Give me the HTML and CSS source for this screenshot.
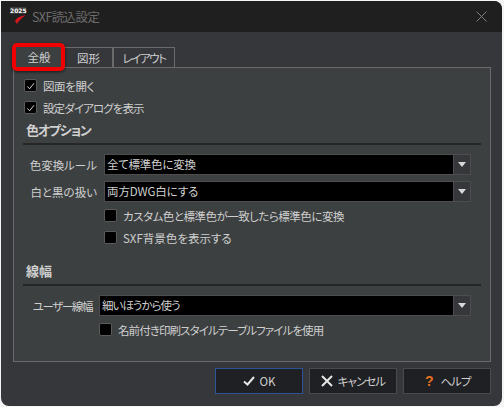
FILE: index.html
```html
<!DOCTYPE html>
<html lang="ja">
<head>
<meta charset="utf-8">
<title>SXF読込設定</title>
<link rel="stylesheet" href="styles.css">
</head>
<body>
<div class="window">
  <header class="titlebar">
    <div class="logo">
      <span class="logo-year">2025</span>
      <svg class="logo-mark" viewBox="0 0 12 9" width="12" height="9"><path d="M12 0 C7 1 2 3 1 6 L3 9 C5 5 8 3 12 0Z" fill="#d8141c"/></svg>
    </div>
    <span class="title">SXF読込設定</span>
    <svg class="close" viewBox="0 0 11 11" width="11" height="11"><path d="M.5.5l10 10M10.5.5l-10 10" stroke="#808080" stroke-width="1" fill="none"/></svg>
  </header>
  <main class="body">
    <nav class="tabs">
      <span class="tab tab-active">全般</span>
      <span class="tab tab-2">図形</span>
      <span class="tab tab-3"><span class="tight-14">レイアウト</span></span>
      <span class="highlight"></span>
    </nav>
    <section class="panel">
      <label class="check check-top">
        <span class="box"><svg viewBox="0 0 12 12" width="12" height="12"><path d="M2.5 6.5l2.5 2.5 4.8-6" stroke="#e8e8e8" stroke-width="1" fill="none"/></svg></span>
        <span class="tight-04">図面を開く</span>
      </label>
      <label class="check check-second">
        <span class="box"><svg viewBox="0 0 12 12" width="12" height="12"><path d="M2.5 6.5l2.5 2.5 4.8-6" stroke="#e8e8e8" stroke-width="1" fill="none"/></svg></span>
        <span class="tight-09">設定ダイアログを表示</span>
      </label>
      <h2 class="heading heading-color"><span class="tight-12">色オプション</span></h2>
      <div class="row row-first">
        <span class="row-label">色変換ルール</span>
        <div class="select"><span class="value tight-02">全て標準色に変換</span><span class="arrow"></span></div>
      </div>
      <div class="row row-next">
        <span class="row-label">白と黒の扱い</span>
        <div class="select"><span class="value tight-01">両方DWG白にする</span><span class="arrow"></span></div>
      </div>
      <label class="check check-sub">
        <span class="box"></span>
        <span class="tight-05">カスタム色と標準色が一致したら標準色に変換</span>
      </label>
      <label class="check check-sub check-sub2">
        <span class="box"></span>
        <span>SXF背景色を表示する</span>
      </label>
      <h2 class="heading heading-line">線幅</h2>
      <div class="row row-width">
        <span class="row-label row-label-narrow"><span class="tight-14">ユーザー線幅</span></span>
        <div class="select"><span class="value tight-10">細いほうから使う</span><span class="arrow"></span></div>
      </div>
      <label class="check check-print">
        <span class="box"></span>
        <span class="tight-09">名前付き印刷スタイルテーブルファイルを使用</span>
      </label>
    </section>
    <footer class="buttons">
      <button class="btn btn-ok"><svg viewBox="0 0 12 10" width="12" height="10"><path d="M1 5.5l3.5 3L11 1" stroke="#e6e6e6" stroke-width="2" fill="none"/></svg>OK</button>
      <button class="btn"><svg viewBox="0 0 12 12" width="12" height="12"><path d="M1 1l10 10M11 1L1 11" stroke="#e6e6e6" stroke-width="2" fill="none"/></svg><span class="tight-09">キャンセル</span></button>
      <button class="btn"><span class="help">?</span><span class="tight-09">ヘルプ</span></button>
    </footer>
  </main>
</div>
</body>
</html>
```
FILE: styles.css
```css
* { box-sizing: border-box; }
html, body { margin: 0; padding: 0; width: 504px; height: 407px; background: #f4f4f4; overflow: hidden; }
body { padding: 1px 2px 1px 1px; font-family: "Noto Sans CJK JP", "Noto Sans", sans-serif; font-size: 11.5px; line-height: 14px; color: #cfcfcf; font-feature-settings: "palt"; }
.window { width: 501px; height: 405px; border-radius: 0 8px 8px 8px; overflow: hidden; background: #35373b; display: flex; flex-direction: column; }
.titlebar { height: 31px; flex: none; background: #1f1f1f; display: flex; align-items: center; padding: 0 15px 0 9px; }
.logo { width: 16px; height: 18px; margin-right: 6px; margin-top: -1px; display: flex; flex-direction: column; align-items: flex-end; }
.logo-year { font: bold 6px/7px "DejaVu Sans", sans-serif; color: #fff; background: #3a3a3a; width: 16px; text-align: center; }
.logo-mark { margin-top: 1px; }
.title { flex: 1; color: #6c6c6c; font-size: 12.5px; letter-spacing: -0.6px; }
.tight-01 { letter-spacing: -0.1px; }
.tight-02 { letter-spacing: -0.25px; }
.tight-04 { letter-spacing: -0.4px; }
.tight-05 { letter-spacing: -0.5px; }
.tight-09 { letter-spacing: -0.9px; }
.tight-10 { letter-spacing: -1px; }
.tight-12 { letter-spacing: -1.2px; }
.tight-14 { letter-spacing: -1.4px; }
.body { flex: 1; padding: 12px 11px 0 12px; display: flex; flex-direction: column; }
.tabs { position: relative; display: flex; align-items: flex-end; height: 23px; flex: none; }
.tab { height: 20px; border: 1px solid #6a6a6a; border-bottom: 0; display: flex; align-items: center; justify-content: center; background: #35373b; padding-top: 1px; }
.tab-active { width: 51px; background: #3c4041; position: relative; z-index: 1; margin-bottom: -1px; height: 24px; border-right: 0; }
.tab-2 { width: 49px; }
.tab-3 { width: 62px; }
.highlight { position: absolute; left: -1px; top: -1px; width: 53px; height: 28px; border: 4px solid #f00000; border-radius: 5px; z-index: 2; box-shadow: 0 1px 3px rgba(0,0,0,.6); }
.panel { height: 295px; flex: none; background: #3c4041; border: 1px solid #6a6a6a; padding: 0 9px; }
.check { display: flex; align-items: center; gap: 6px; height: 14px; }
.box { width: 13px; height: 13px; flex: none; align-self: flex-start; background: #000; border: 1px solid #5a5a5a; border-radius: 2px; display: flex; align-items: center; justify-content: center; }
.check-top { margin: 11px 0 0 1px; }
.check-second { margin: 8px 0 0 1px; }
.heading { margin: 0; font-size: 13px; line-height: 16px; font-weight: 700; border-bottom: 2px solid #262626; height: 23px; padding-left: 3px; }
.heading-color { margin-top: 7px; }
.heading-line { margin-top: 18px; }
.row { display: flex; align-items: center; height: 21px; }
.row-first { margin-top: 9px; }
.row-next { margin-top: 6px; }
.row-width { margin-top: 9px; }
.row-label { width: 81px; padding-right: 7px; white-space: nowrap; text-align: right; }
.row-label-narrow { width: 76px; }
.select { flex: 1; height: 21px; margin-right: 10px; border: 1px solid #4d4d4d; background: #000; display: flex; align-items: stretch; }
.value { flex: 1; padding-left: 2px; line-height: 18px; }
.arrow { width: 17px; background: #35373b; border-left: 1px solid #4d4d4d; position: relative; }
.arrow::after { content: ""; position: absolute; left: 4px; top: 7px; border-left: 4px solid transparent; border-right: 4px solid transparent; border-top: 5px solid #d8d8d8; }
.check-sub { margin: 7px 0 0 81px; }
.check-sub2 { margin-top: 8px; }
.check-print { margin: 7px 0 0 76px; }
.buttons { display: flex; justify-content: flex-end; gap: 6px; margin-top: 6px; }
.btn { width: 88px; height: 26px; background: #1f2024; border: 1px solid #4a4a4a; color: #cfcfcf; font: 11.5px "Noto Sans CJK JP", sans-serif; font-feature-settings: "palt"; display: flex; align-items: center; justify-content: center; gap: 5px; padding: 0; }
.btn-ok { border-color: #2d5596; }
.help { color: #e8701a; font: bold 14px "Liberation Sans", sans-serif; width: 12px; text-align: center; }
```
